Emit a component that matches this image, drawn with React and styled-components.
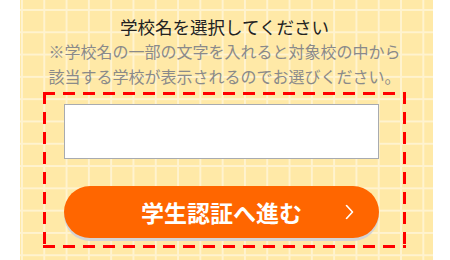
import React from 'react';
import styled, { createGlobalStyle } from 'styled-components';

const GlobalStyle = createGlobalStyle`
  html, body {
    margin: 0;
    padding: 0;
    background: #fff;
  }
  body {
    font-family: "Noto Sans CJK JP", "Noto Sans", sans-serif;
  }
`;

const Panel = styled.section`
  width: 413px;
  margin-left: 20px;
  min-height: 260px;
  box-sizing: border-box;
  padding: 14px 0 20px;
  background-color: #ffe9a7;
  background-image:
    linear-gradient(to right, #fff3cf 0, #fff3cf 2px, transparent 2px),
    linear-gradient(to bottom, #fff3cf 0, #fff3cf 2px, transparent 2px);
  background-size: 22.3px 22.3px;
  background-position: 1px 9px;
`;

const TextBlock = styled.div`
  width: 363px;
  margin-left: 23px;
  text-align: center;
`;

const Title = styled.h2`
  margin: 0;
  font-size: 17.5px;
  line-height: 25px;
  font-weight: 400;
  color: #222;
`;

const Note = styled.p`
  margin: 0;
  font-size: 16px;
  line-height: 25px;
  color: #8a8a8a;
`;

const DashedBox = styled.div`
  width: 363px;
  margin: 3px 0 0 23px;
  box-sizing: border-box;
  padding: 12px 24px 10px 18px;
  background:
    repeating-linear-gradient(to right, #f00 0 12px, transparent 12px 20px) top left / 100% 3px no-repeat,
    repeating-linear-gradient(to right, #f00 0 12px, transparent 12px 20px) bottom left / 100% 3px no-repeat,
    repeating-linear-gradient(to bottom, #f00 0 12px, transparent 12px 20px) top left / 3px 100% no-repeat,
    repeating-linear-gradient(to bottom, #f00 0 12px, transparent 12px 20px) top right / 3px 100% no-repeat;
  display: flex;
  flex-direction: column;
  gap: 27px;
`;

const SchoolInput = styled.input`
  display: block;
  width: 315px;
  height: 55px;
  box-sizing: border-box;
  margin: 0 0 0 3px;
  border: 1px solid #a8abb0;
  border-radius: 0;
  background: #fff;
  font-size: 16px;
  padding: 0 10px;
  outline: none;
`;

const NextButton = styled.button`
  position: relative;
  width: 315px;
  height: 52px;
  margin-left: 3px;
  border: none;
  border-radius: 26px;
  background: #ff6600;
  box-shadow: 0 3px 0 #d4d4d4;
  color: #fff;
  font-family: "Noto Sans CJK JP", "Noto Sans", sans-serif;
  font-size: 23px;
  font-weight: 700;
  display: flex;
  align-items: center;
  justify-content: center;
  cursor: pointer;
  padding: 0;
`;

const Chevron = styled.svg`
  position: absolute;
  right: 25px;
  top: 50%;
  transform: translateY(-50%);
`;

const App = () => {
  return (
    <>
      <GlobalStyle />
      <Panel>
        <TextBlock>
          <Title>学校名を選択してください</Title>
          <Note>
            ※学校名の一部の文字を入れると対象校の中から
            <br />
            該当する学校が表示されるのでお選びください。
          </Note>
        </TextBlock>
        <DashedBox>
          <SchoolInput type="text" />
          <NextButton type="button">
            学生認証へ進む
            <Chevron width="9" height="15" viewBox="0 0 9 15">
              <polyline points="1.5,1 7.5,7.5 1.5,14" fill="none" stroke="#fff" strokeWidth="1.6" strokeLinejoin="round" strokeLinecap="round" />
            </Chevron>
          </NextButton>
        </DashedBox>
      </Panel>
    </>
  );
};

export default App;
